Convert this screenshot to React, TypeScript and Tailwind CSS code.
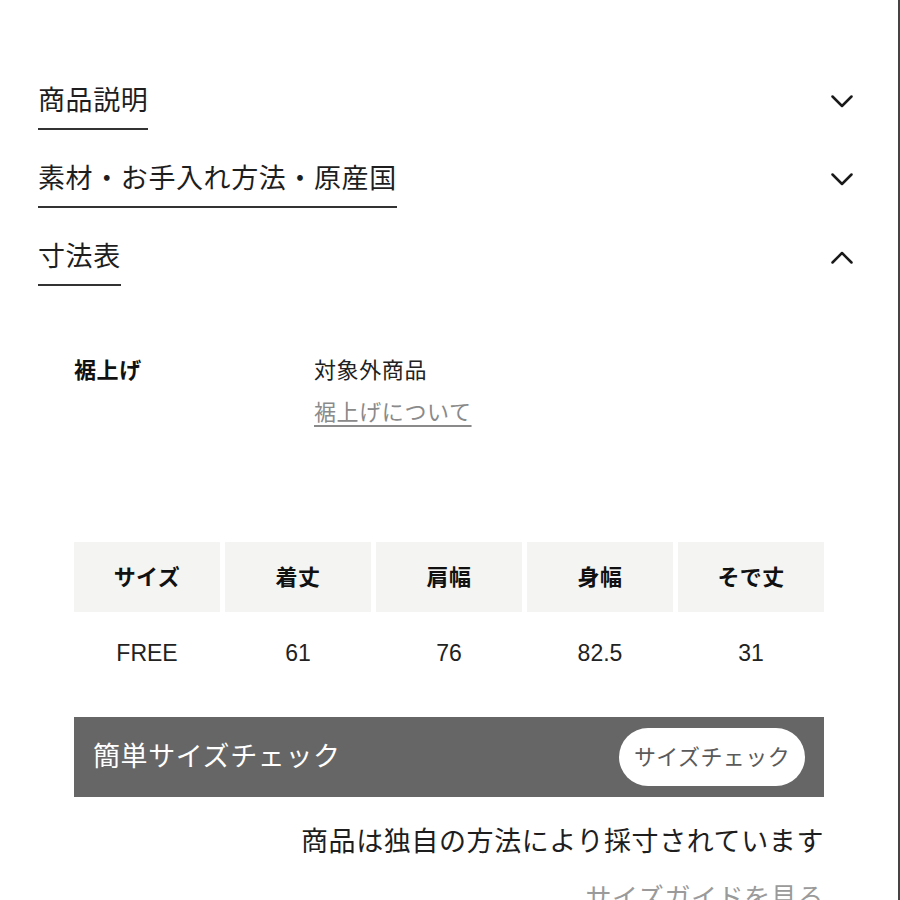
import React from "react";

const FONT = { fontFamily: '"Liberation Sans", "Noto Sans CJK JP", sans-serif' };

function Chevron({ up }: { up?: boolean }) {
  return (
    <svg width="22" height="13" viewBox="0 0 22 13" fill="none">
      <polyline
        points={up ? "1.5,11.5 11,2 20.5,11.5" : "1.5,1.5 11,11 20.5,1.5"}
        stroke="#1a1a1a"
        strokeWidth="2.5"
        strokeLinecap="round"
        strokeLinejoin="round"
      />
    </svg>
  );
}

function AccRow({ title, up }: { title: string; up?: boolean }) {
  return (
    <div className="flex items-start justify-between">
      <span className="text-[27px] leading-[40px] tracking-[0.6px] text-[#1e1e1e] pb-[7px] border-b-2 border-[#333]">
        {title}
      </span>
      <div className="h-[40px] flex items-center">
        <Chevron up={up} />
      </div>
    </div>
  );
}

const headers = ["サイズ", "着丈", "肩幅", "身幅", "そで丈"];
const values = ["FREE", "61", "76", "82.5", "31"];

export default function App() {
  return (
    <div className="w-[900px] h-[900px] overflow-hidden bg-white border-r-2 border-[#444]" style={FONT}>
      <div className="pt-[81px] pl-[38px] pr-[45px] flex flex-col gap-[29px]">
        <AccRow title="商品説明" />
        <AccRow title="素材・お手入れ方法・原産国" />
        <AccRow title="寸法表" up />
      </div>

      <div className="px-[74px]">
        <div className="mt-[64px] flex text-[22px] leading-[42px] tracking-[0.6px]">
          <div className="w-[240px] font-bold text-[#111]">裾上げ</div>
          <div className="flex flex-col">
            <span className="text-[#222]">対象外商品</span>
            <span className="text-[#8a8a8a] underline underline-offset-[5px] decoration-[#8a8a8a]">
              裾上げについて
            </span>
          </div>
        </div>

        <div className="mt-[108px]">
          <div className="grid grid-cols-5 gap-x-[5px]">
            {headers.map((h) => (
              <div
                key={h}
                className="h-[70px] bg-[#f4f4f2] flex items-center justify-center text-[22px] font-bold text-[#111] tracking-[0.4px]"
              >
                {h}
              </div>
            ))}
            {values.map((v, i) => (
              <div
                key={i}
                className="h-[82px] flex items-center justify-center text-[23px] text-[#222]"
              >
                {v}
              </div>
            ))}
          </div>
        </div>

        <div className="mt-[23px] h-[80px] bg-[#666666] flex items-center justify-between pl-[19px] pr-[19px]">
          <span className="text-[27px] tracking-[0.6px] text-white">簡単サイズチェック</span>
          <button className="w-[186px] h-[58px] rounded-full bg-white text-[22px] tracking-[0.4px] text-[#5a5a5a] flex items-center justify-center">
            サイズチェック
          </button>
        </div>

        <div className="mt-[25px] text-right text-[27px] leading-[40px] tracking-[0.6px] text-[#1e1e1e]">
          商品は独自の方法により採寸されています
        </div>
        <div className="mt-[16px] text-right text-[26px] leading-[40px] tracking-[0.6px] text-[#9a9a9a]">
          サイズガイドを見る
        </div>
      </div>
    </div>
  );
}
